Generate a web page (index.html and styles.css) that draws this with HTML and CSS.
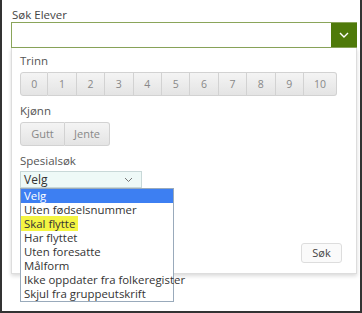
FILE: index.html
```html
<!DOCTYPE html>
<html lang="no">
<head>
    <meta charset="UTF-8">
    <title>Søk Elever</title>
    <link rel="stylesheet" href="styles.css">
</head>
<body>

<div class="frame">
    <label class="top-label">Søk Elever</label>
    <div class="search-box">
        <div class="search-input"></div>
        <div class="search-toggle">
            <svg width="10" height="6" viewBox="0 0 10 6"><path d="M1 1 L5 5 L9 1" fill="none" stroke="#fff" stroke-width="1.4"/></svg>
        </div>
    </div>

    <div class="panel">
        <div class="field-label">Trinn</div>
        <div class="btn-group">
            <span class="btn">0</span>
            <span class="btn">1</span>
            <span class="btn">2</span>
            <span class="btn">3</span>
            <span class="btn">4</span>
            <span class="btn">5</span>
            <span class="btn">6</span>
            <span class="btn">7</span>
            <span class="btn">8</span>
            <span class="btn">9</span>
            <span class="btn wide">10</span>
        </div>

        <div class="field-label">Kjønn</div>
        <div class="btn-group">
            <span class="btn gender">Gutt</span>
            <span class="btn gender">Jente</span>
        </div>

        <div class="field-label">Spesialsøk</div>
        <div class="select-wrap">
            <div class="select">
                <span>Velg</span>
                <svg width="9" height="6" viewBox="0 0 9 6"><path d="M1 1 L4.5 4.5 L8 1" fill="none" stroke="#777" stroke-width="1"/></svg>
            </div>
            <ul class="options">
                <li class="selected">Velg</li>
                <li>Uten fødselsnummer</li>
                <li><span class="marked">Skal flytte</span></li>
                <li>Har flyttet</li>
                <li>Uten foresatte</li>
                <li>Målform</li>
                <li>Ikke oppdater fra folkeregister</li>
                <li>Skjul fra gruppeutskrift</li>
            </ul>
        </div>

        <div class="panel-footer">
            <span class="btn search-btn">Søk</span>
        </div>
    </div>
</div>

</body>
</html>
```

FILE: styles.css
```css
body {
    margin: 0;
    font-family: "Open Sans", Arial, sans-serif;
    color: #444;
    background: #fff;
}

.frame {
    width: 362px;
    height: 313px;
    box-sizing: border-box;
    border-left: 2px solid #333;
    border-right: 2px solid #333;
    border-bottom: 2px solid #333;
    padding: 7px 3px 0 9px;
}

.top-label {
    display: block;
    font-size: 11.5px;
    line-height: 15px;
    margin-left: 1px;
    color: #444;
}

.search-box {
    display: flex;
    height: 24px;
    border: 1px solid #8aa55a;
    border-right: none;
}

.search-input {
    flex: 1;
}

.search-toggle {
    width: 26px;
    background: #4f7a0a;
    display: flex;
    align-items: center;
    justify-content: center;
}

.panel {
    height: 226px;
    box-sizing: border-box;
    border: 1px solid #ddd;
    border-top: none;
    box-shadow: 0 2px 4px rgba(0, 0, 0, 0.15);
    padding: 6px 8px 0 8px;
    position: relative;
}

.field-label {
    font-size: 11.5px;
    line-height: 14px;
    color: #555;
    margin-bottom: 4px;
}

.btn-group {
    display: flex;
    margin-bottom: 8px;
}

.btn {
    display: inline-block;
    width: 28.4px;
    height: 24px;
    box-sizing: border-box;
    text-align: center;
    line-height: 22px;
    font-size: 10.5px;
    color: #888;
    background: linear-gradient(#f4f4f4, #e4e4e4);
    border: 1px solid #d2d2d2;
    border-left-width: 0;
}

.btn-group .btn:first-child {
    border-left-width: 1px;
    border-radius: 3px 0 0 3px;
}

.btn-group .btn:last-child {
    border-radius: 0 3px 3px 0;
}

.btn.wide {
    width: 33px;
}

.btn.gender {
    width: 45px;
    font-size: 11px;
}

.select-wrap {
    position: relative;
    margin-top: -1px;
}

.select {
    width: 122px;
    height: 17px;
    box-sizing: border-box;
    border: 1px solid #c8d8d8;
    background: #eef9f7;
    display: flex;
    align-items: center;
    justify-content: space-between;
    padding: 0 8px 0 3px;
    font-size: 12px;
    color: #333;
}

.options {
    position: absolute;
    left: 0;
    top: 17px;
    margin: 0;
    padding: 0;
    list-style: none;
    width: 154px;
    box-sizing: border-box;
    border: 1px solid #9ab;
    background: #fff;
    font-size: 11.4px;
    color: #333;
}

.options li {
    height: 14px;
    line-height: 14px;
    padding-left: 3px;
    white-space: nowrap;
}

.options li.selected {
    background: #3d7ff2;
    color: #fff;
}

.marked {
    background: #f4f442;
    margin-left: -3px;
    padding: 0 3px;
}

.panel-footer {
    display: flex;
    justify-content: flex-end;
    margin-top: 55px;
    padding-right: 6px;
}

.btn.search-btn {
    width: 41px;
    height: 20px;
    line-height: 18px;
    font-size: 11px;
    color: #444;
    border: 1px solid #ddd;
    border-radius: 3px;
    background: #fafafa;
}
```
